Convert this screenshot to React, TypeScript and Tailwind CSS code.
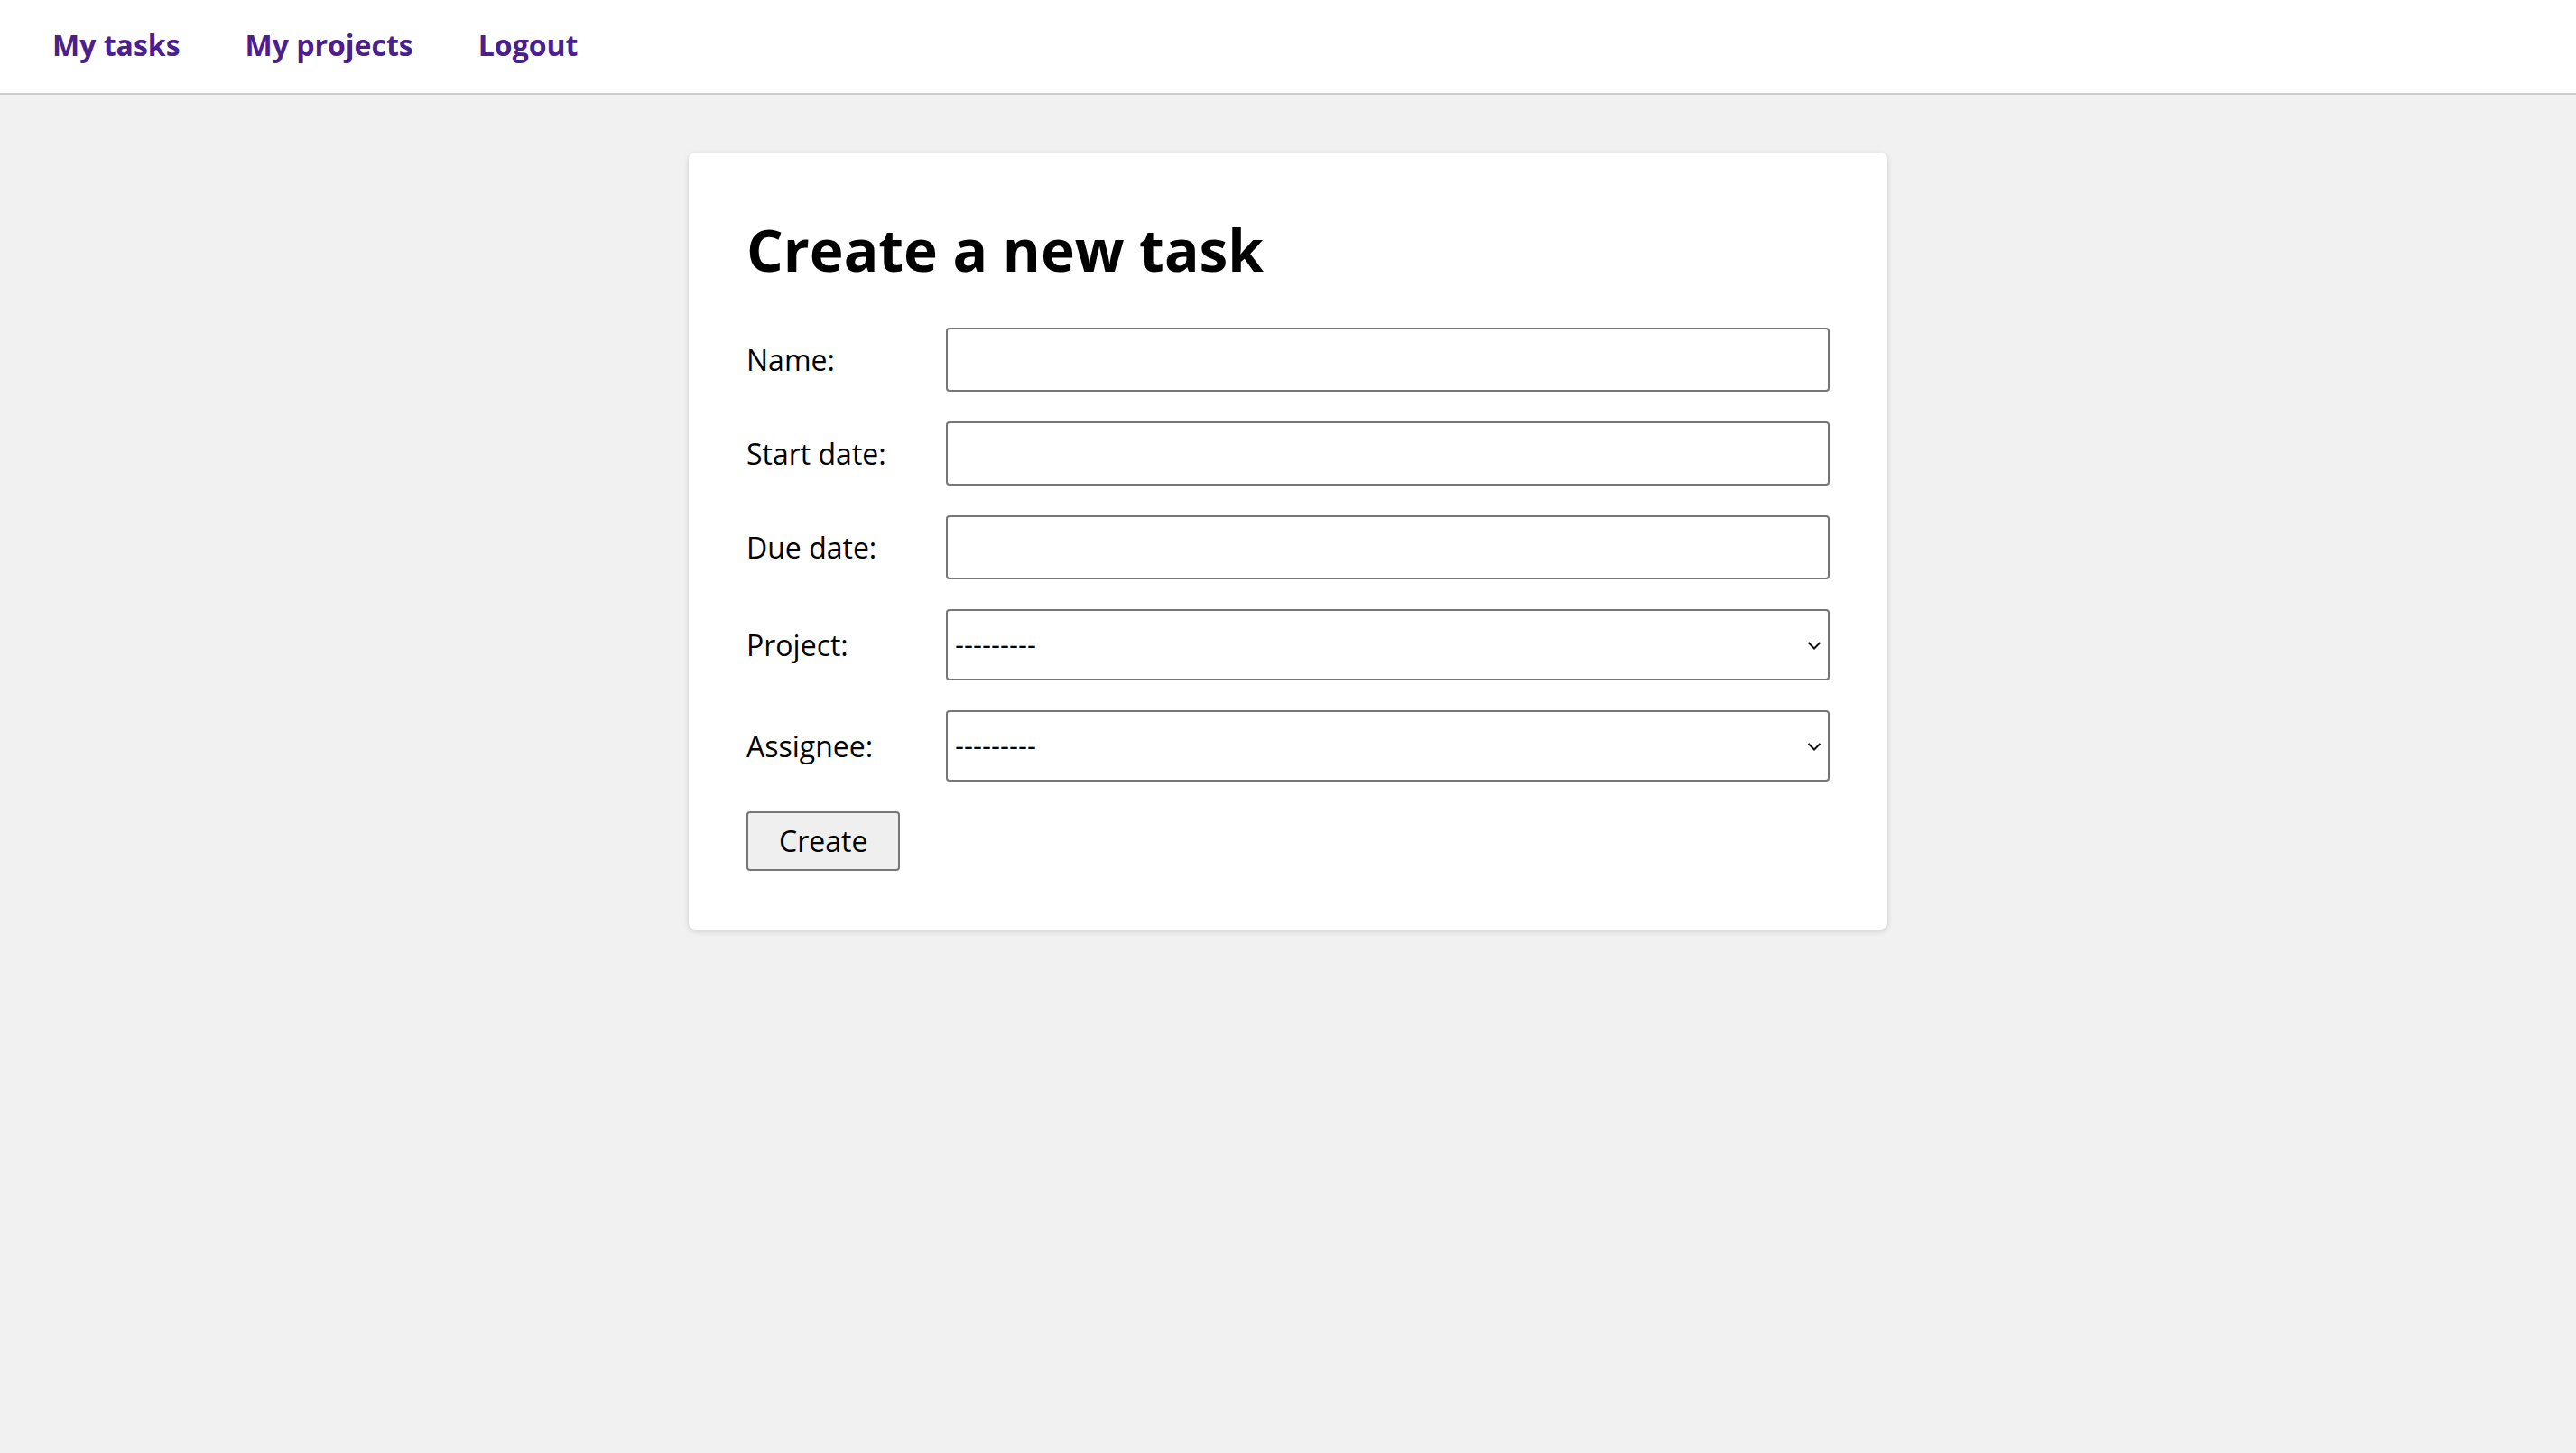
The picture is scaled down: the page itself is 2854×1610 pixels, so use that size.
import React from 'react';

const navLinks = ['My tasks', 'My projects', 'Logout'];

const Chevron: React.FC = () => (
  <svg
    className="pointer-events-none absolute right-[9px] top-1/2 h-[10px] w-[16px] -translate-y-1/2"
    viewBox="0 0 16 10"
    fill="none"
    stroke="#111"
    strokeWidth="2"
  >
    <path d="M1.5 2 L8 8.5 L14.5 2" />
  </svg>
);

const TextRow: React.FC<{ label: string }> = ({ label }) => (
  <>
    <label className="text-[32px] leading-[44px] text-black">{label}</label>
    <input
      type="text"
      className="h-[71px] w-full rounded-[4px] border-2 border-[#767676] bg-white px-[10px] text-[30px] outline-none"
    />
  </>
);

const SelectRow: React.FC<{ label: string }> = ({ label }) => (
  <>
    <label className="text-[32px] leading-[44px] text-black">{label}</label>
    <div className="relative">
      <select className="h-[79px] w-full appearance-none rounded-[4px] border-2 border-[#767676] bg-white pl-[8px] pr-[40px] font-['Liberation_Sans',sans-serif] text-[30px] text-black outline-none">
        <option>---------</option>
      </select>
      <Chevron />
    </div>
  </>
);

export default function App() {
  return (
    <div className="min-h-[1610px] bg-[#f1f1f1] font-['Open_Sans',sans-serif]">
      <nav className="flex h-[105px] items-center gap-[72px] border-b-2 border-[#cbcbcb] bg-white px-[58px] pb-[4px]">
        {navLinks.map((link) => (
          <a key={link} href="#" className="text-[32px] font-bold leading-[44px] text-[#4b208c]">
            {link}
          </a>
        ))}
      </nav>

      <div className="mx-auto mt-[64px] w-[1328px] rounded-[8px] bg-white px-[64px] pb-[65px] pt-[64px] shadow-[0_2px_6px_rgba(0,0,0,0.15)]">
        <h1 className="mb-[43px] text-[64px] font-bold leading-[87px] text-black">Create a new task</h1>
        <form className="grid grid-cols-[221px_1fr] items-center gap-y-[33px]">
          <TextRow label="Name:" />
          <TextRow label="Start date:" />
          <TextRow label="Due date:" />
          <SelectRow label="Project:" />
          <SelectRow label="Assignee:" />
          <div className="col-span-2">
            <button
              type="button"
              className="h-[66px] rounded-[4px] border-2 border-[#767676] bg-[#efefef] px-[34px] text-[32px] leading-[44px] text-black"
            >
              Create
            </button>
          </div>
        </form>
      </div>
    </div>
  );
}
